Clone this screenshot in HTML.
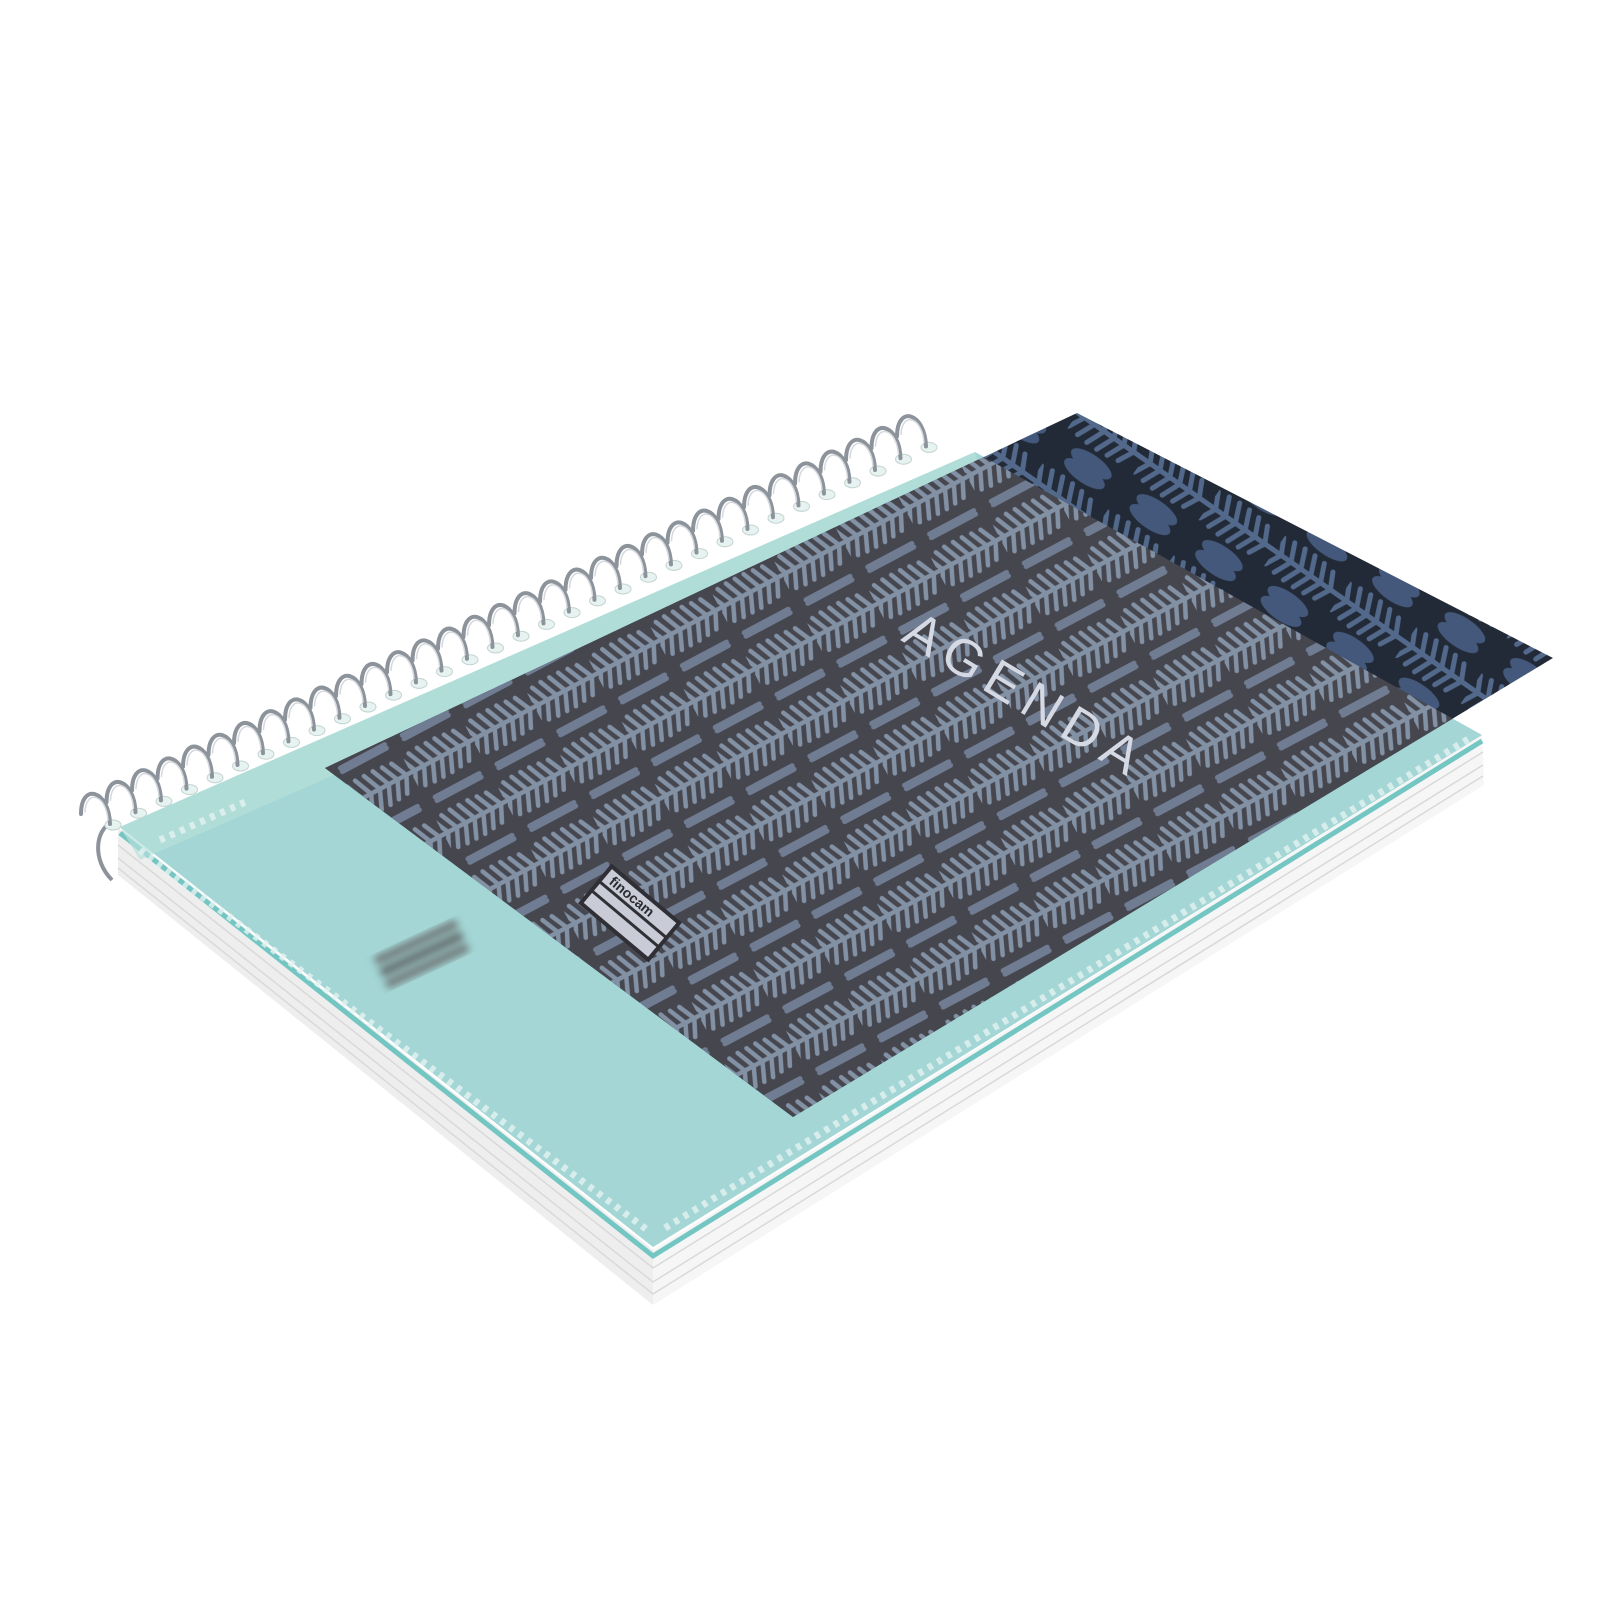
<!DOCTYPE html>
<html><head><meta charset="utf-8"><style>
html,body{margin:0;padding:0;background:#fff;}
svg{display:block;}
</style></head><body>
<svg width="1600" height="1600" viewBox="0 0 1600 1600" xmlns="http://www.w3.org/2000/svg">
<defs>
  <pattern id="fern" width="70" height="70" patternUnits="userSpaceOnUse" patternTransform="rotate(-28)">
    <rect width="70" height="70" fill="#3e3d44"/>
    <g stroke="#8594a9" stroke-width="4.5" stroke-linecap="round" fill="none">
      <path d="M0,35 L70,35"/>
      <path d="M5,35 L-3,18 M15,35 L7,17 M25,35 L17,16 M35,35 L27,16 M45,35 L37,16 M55,35 L47,17 M65,35 L57,18"/>
      <path d="M5,35 L-3,52 M15,35 L7,53 M25,35 L17,54 M35,35 L27,54 M45,35 L37,54 M55,35 L47,53 M65,35 L57,52"/>
      <path d="M10,2 L60,2 M10,68 L60,68" stroke="#6e7c92" stroke-width="5"/>
    </g>
  </pattern>
  <pattern id="fern2" width="80" height="80" patternUnits="userSpaceOnUse" patternTransform="rotate(35)">
    <rect width="80" height="80" fill="#222a37"/>
    <g stroke="#53698b" stroke-width="5" stroke-linecap="round" fill="none">
      <path d="M0,40 L80,40"/>
      <path d="M8,40 L0,24 M20,40 L12,22 M32,40 L24,21 M44,40 L36,21 M56,40 L48,22 M68,40 L60,24"/>
      <path d="M8,40 L0,56 M20,40 L12,58 M32,40 L24,59 M44,40 L36,59 M56,40 L48,58 M68,40 L60,56"/>
      <ellipse cx="40" cy="6" rx="24" ry="9" fill="#43587a" stroke="none"/>
      <ellipse cx="40" cy="74" rx="24" ry="9" fill="#43587a" stroke="none"/>
    </g>
  </pattern>
  <clipPath id="mintClip"><polygon points="120,827 975,452 1482,735 653,1247"/></clipPath>
  <filter id="blur"><feGaussianBlur stdDeviation="4"/></filter>
  <g id="coil">
    <ellipse cx="0" cy="3" rx="8" ry="5" fill="#e6f3f1" stroke="#c4d4d2" stroke-width="1"/>
    <path d="M-3,2 C-4,-32 -32,-40 -32,-8" fill="none" stroke="#8d939b" stroke-width="4" stroke-linecap="round"/>
    <path d="M-5,-2 C-7,-28 -27,-33 -28,-10" fill="none" stroke="#d5d9de" stroke-width="1.5" stroke-linecap="round"/>
  </g>
</defs>

<!-- page stack -->
<polygon points="118,828 653,1250 653,1305 118,875" fill="#eeeeee"/>
<polygon points="653,1250 1482,735 1484,785 653,1305" fill="#f6f6f6"/>
<g stroke="#d9d9d9" stroke-width="1.5" fill="none">
  <path d="M118,845 L653,1268 L1483,752"/>
  <path d="M118,858 L653,1282 L1483,765"/>
  <path d="M118,868 L653,1294 L1483,776"/>
</g>
<path d="M120,833 L653,1256 L1482,741" fill="none" stroke="#74c6c3" stroke-width="5"/>

<!-- mint cover -->
<polygon points="120,827 975,452 1482,735 653,1247" fill="#a3d6d5"/>
<polygon points="120,827 975,452 985,490 140,860" fill="#b6e0da" opacity="0.7"/>

<!-- navy insert sheet -->
<polygon points="325,768 1077,413 1553,658 793,1117" fill="url(#fern2)"/>
<g clip-path="url(#mintClip)">
  <polygon points="325,768 1077,413 1553,658 793,1117" fill="url(#fern)"/>
  <polygon points="325,768 1077,413 1553,658 793,1117" fill="#7a8292" opacity="0.15"/>
</g>

<!-- ring marks -->
<path d="M140,850 L650,1232" fill="none" stroke="#e4f3f1" stroke-width="7" stroke-dasharray="5,6" opacity="0.8"/>
<path d="M665,1228 L1470,738" fill="none" stroke="#e4f3f1" stroke-width="7" stroke-dasharray="5,6" opacity="0.8"/>
<path d="M160,840 L250,800" fill="none" stroke="#e4f3f1" stroke-width="7" stroke-dasharray="5,6" opacity="0.8"/>

<!-- blurred code -->
<g filter="url(#blur)" transform="translate(422,955) rotate(-25)">
  <rect x="-45" y="-18" width="90" height="8" fill="#6c7070"/>
  <rect x="-45" y="-5" width="90" height="8" fill="#5d6161"/>
  <rect x="-45" y="8" width="90" height="8" fill="#6c7070"/>
</g>

<!-- finocam logo -->
<g transform="translate(630,913) rotate(40)">
  <rect x="-46" y="-26" width="92" height="52" fill="#2f2f35"/>
  <rect x="-42" y="-22" width="84" height="16" fill="#c9cbd6"/>
  <rect x="-42" y="-3" width="84" height="9" fill="#c9cbd6"/>
  <rect x="-42" y="9" width="84" height="13" fill="#c9cbd6"/>
  <text x="-36" y="-9" font-family="'Liberation Sans',sans-serif" font-size="14" fill="#2a2a30" font-weight="bold">finocam</text>
</g>

<!-- AGENDA -->
<text x="0" y="0" transform="translate(900,640) rotate(31)" font-family="'Liberation Sans',sans-serif" font-size="52" letter-spacing="9" fill="#d4d9e3">AGENDA</text>

<!-- spiral -->
<path d="M112,822 C95,830 92,860 112,880" fill="none" stroke="#8d939b" stroke-width="4"/>
<g transform="translate(0,12)">
<use href="#coil" x="113" y="810"/><use href="#coil" x="138.5" y="798.2"/><use href="#coil" x="164" y="786.4"/><use href="#coil" x="189.5" y="774.6"/><use href="#coil" x="215" y="762.8"/><use href="#coil" x="240.5" y="751"/><use href="#coil" x="266" y="739.2"/><use href="#coil" x="291.5" y="727.4"/><use href="#coil" x="317" y="715.6"/><use href="#coil" x="342.5" y="703.8"/><use href="#coil" x="368" y="692"/><use href="#coil" x="393.5" y="680.2"/><use href="#coil" x="419" y="668.4"/><use href="#coil" x="444.5" y="656.6"/><use href="#coil" x="470" y="644.8"/><use href="#coil" x="495.5" y="633"/><use href="#coil" x="521" y="621.2"/><use href="#coil" x="546.5" y="609.4"/><use href="#coil" x="572" y="597.6"/><use href="#coil" x="597.5" y="585.8"/><use href="#coil" x="623" y="574"/><use href="#coil" x="648.5" y="562.2"/><use href="#coil" x="674" y="550.4"/><use href="#coil" x="699.5" y="538.6"/><use href="#coil" x="725" y="526.8"/><use href="#coil" x="750.5" y="515"/><use href="#coil" x="776" y="503.2"/><use href="#coil" x="801.5" y="491.4"/><use href="#coil" x="827" y="479.6"/><use href="#coil" x="852.5" y="467.8"/><use href="#coil" x="878" y="456"/><use href="#coil" x="903.5" y="444.2"/><use href="#coil" x="929" y="432.4"/>
</g>
</svg>
</body></html>
